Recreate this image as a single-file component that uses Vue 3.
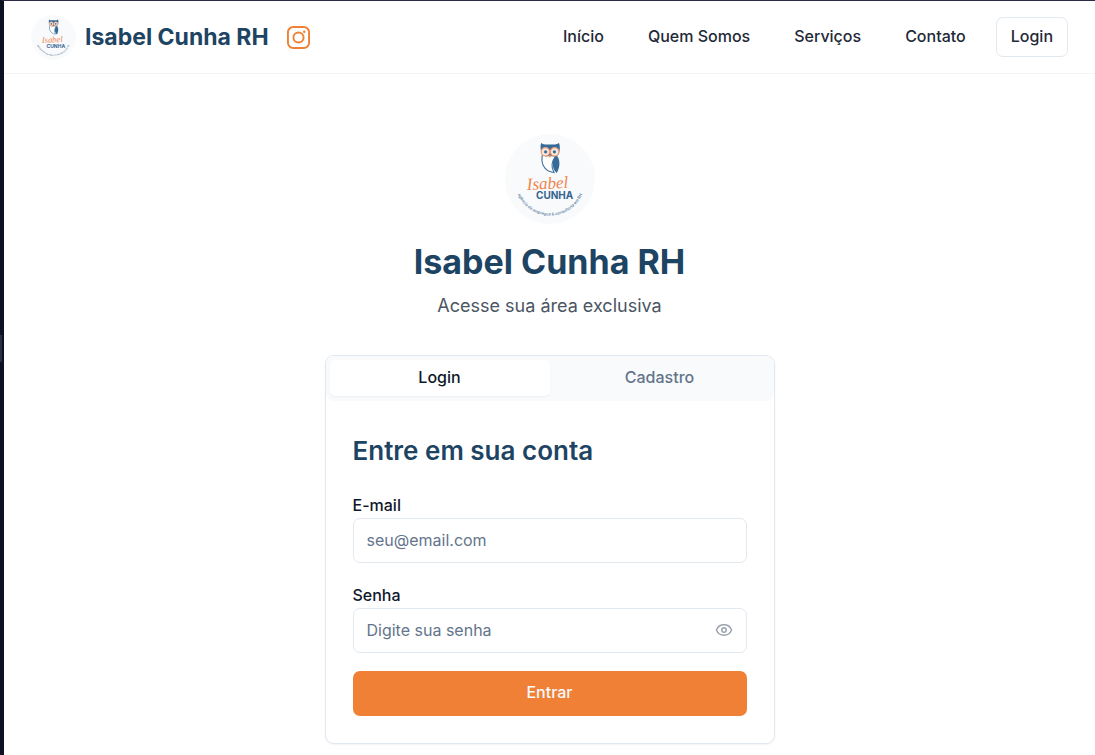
<script setup>
import { ref } from 'vue'

const links = ['Início', 'Quem Somos', 'Serviços', 'Contato']
const tabs = ['Login', 'Cadastro']
const activeTab = ref('Login')
const showPassword = ref(false)
const email = ref('')
const password = ref('')
</script>

<template>
  <div class="page">
    <span class="handle" aria-hidden="true"></span>

    <svg class="defs" width="0" height="0" aria-hidden="true">
      <symbol id="brand" viewBox="0 0 90 90" overflow="visible">
        <circle cx="45" cy="45" r="45" fill="#f8fafc" />
        <path d="M37.6 20 C35.5 28 38 37 49 38.5 C46 33 46.5 27 51 22 Z" fill="#fff" stroke="#3f6f98" stroke-width="1.1" />
        <path d="M51 21 C55 24 55.8 32 51.8 38.9 C46.5 35 46.5 26 51 21 Z" fill="#346b98" />
        <path d="M36.2 9 C39 11.2 42 10.5 45 10.5 C48 10.5 51 11.2 54 9 C55.4 12 54.8 16 54 20 C51 23 48 22.5 45 22 C42 22.5 39 23 36.8 20 C35.5 16 35 12 36.2 9 Z" fill="#346b98" />
        <circle cx="40.4" cy="17.8" r="4.2" fill="#fbe6da" stroke="#ee9c78" stroke-width="1.2" />
        <circle cx="49.6" cy="17.8" r="4.2" fill="#fbe6da" stroke="#ee9c78" stroke-width="1.2" />
        <circle cx="40.6" cy="17.8" r="1.6" fill="#346b98" />
        <circle cx="49.4" cy="17.8" r="1.6" fill="#346b98" />
        <path d="M43.6 21 L46.4 21 L45 24 Z" fill="#f08040" />
        <text x="22" y="56" class="script" transform="rotate(-3 22 56)">Isabel</text>
        <text x="31" y="65" class="surname">CUNHA</text>
        <path id="arc" d="M10.8 54 A35 35 0 0 0 79.2 54" fill="none" />
        <text class="tagline"><textPath href="#arc" startOffset="50%" text-anchor="middle">agência de empregos &amp; consultoria em RH</textPath></text>
      </symbol>
    </svg>

    <header class="topbar">
      <div class="brand">
        <svg class="logo-small" role="img" aria-label="Isabel Cunha"><use href="#brand" /></svg>
        <span class="brand-name">Isabel Cunha RH</span>
        <a class="instagram" href="#" aria-label="Instagram">
          <svg viewBox="0 0 24 24" fill="none" stroke="currentColor" stroke-width="2">
            <rect x="1" y="1" width="22" height="22" rx="5.5" />
            <circle cx="12" cy="12" r="5.3" />
            <circle cx="18" cy="6" r="1.3" fill="currentColor" stroke="none" />
          </svg>
        </a>
      </div>
      <nav class="nav">
        <a v-for="link in links" :key="link" href="#" class="nav-link">{{ link }}</a>
        <a href="#" class="nav-login">Login</a>
      </nav>
    </header>

    <main class="main">
      <svg class="logo-large" role="img" aria-label="Isabel Cunha"><use href="#brand" /></svg>
      <h1>Isabel Cunha RH</h1>
      <p class="subtitle">Acesse sua área exclusiva</p>

      <section class="card">
        <div class="tabs" role="tablist">
          <button
            v-for="tab in tabs"
            :key="tab"
            type="button"
            role="tab"
            class="tab"
            :class="{ active: tab === activeTab }"
            :aria-selected="tab === activeTab"
            @click="activeTab = tab"
          >{{ tab }}</button>
        </div>
        <form class="form" @submit.prevent>
          <h2>Entre em sua conta</h2>
          <div class="field">
            <label for="email">E-mail</label>
            <input id="email" v-model="email" type="email" placeholder="seu@email.com" />
          </div>
          <div class="field">
            <label for="password">Senha</label>
            <div class="password">
              <input id="password" v-model="password" :type="showPassword ? 'text' : 'password'" placeholder="Digite sua senha" />
              <button type="button" class="reveal" aria-label="Mostrar senha" @click="showPassword = !showPassword">
                <svg viewBox="0 0 24 24" fill="none" stroke="currentColor" stroke-width="2" stroke-linecap="round" stroke-linejoin="round">
                  <path d="M2.06 12.35a1 1 0 0 1 0-.7 10.75 10.75 0 0 1 19.88 0 1 1 0 0 1 0 .7 10.75 10.75 0 0 1-19.88 0" />
                  <circle cx="12" cy="12" r="3" />
                </svg>
              </button>
            </div>
          </div>
          <button type="submit" class="submit">Entrar</button>
        </form>
      </section>
    </main>
  </div>
</template>

<style>
body {
  margin: 0;
  background: #fff;
}
</style>

<style scoped>
.page {
  position: relative;
  box-sizing: border-box;
  min-height: 100vh;
  border-top: 1px solid #2a2c44;
  border-left: 4px solid #0d1222;
  font-family: Inter, "Liberation Sans", sans-serif;
  font-size: 16px;
  line-height: 24px;
  color: #0f172a;
}
.handle {
  position: absolute;
  left: -4px;
  top: 334px;
  width: 2px;
  height: 27px;
  background: #2b3040;
}
.defs {
  position: absolute;
}
.script {
  font: italic 17px "Liberation Serif", serif;
  fill: #f0854e;
}
.surname {
  font: 700 10px Inter, sans-serif;
  fill: #34648f;
}
.tagline {
  font: 500 4px Inter, sans-serif;
  fill: #54799a;
}
.topbar {
  display: flex;
  align-items: center;
  justify-content: space-between;
  box-sizing: border-box;
  height: 73px;
  padding: 0 27px;
  border-bottom: 1px solid #f3f4f6;
}
.brand {
  display: flex;
  align-items: center;
}
.logo-small {
  width: 45px;
  height: 45px;
  overflow: visible;
}
.brand-name {
  margin: 0 18px 0 9px;
  font-size: 23px;
  font-weight: 700;
  line-height: 32px;
  color: #1e4463;
}
.instagram {
  display: flex;
  color: #f08035;
}
.instagram svg {
  width: 23px;
  height: 23px;
}
.nav {
  display: flex;
  align-items: center;
  gap: 16px;
}
.nav a {
  padding: 6px 14px 8px;
  color: #1f2937;
  font-weight: 500;
  text-decoration: none;
}
.nav .nav-login {
  border: 1px solid #e2e8f0;
  border-radius: 7px;
}
.main {
  display: flex;
  flex-direction: column;
  align-items: center;
  padding: 60px 16px 11px;
}
.logo-large {
  width: 90px;
  height: 90px;
  overflow: visible;
}
h1 {
  margin: 18px 0 10px;
  font-size: 34px;
  font-weight: 700;
  line-height: 40px;
  color: #1e4463;
}
.subtitle {
  margin: 0 0 35px;
  font-size: 18px;
  line-height: 28px;
  color: #4b5563;
}
.card {
  box-sizing: border-box;
  width: 100%;
  max-width: 450px;
  border: 1px solid #e2e8f0;
  border-radius: 9px;
  background: #fff;
  box-shadow: 0 1px 2px rgba(0, 0, 0, 0.05);
}
.tabs {
  display: grid;
  grid-template-columns: 1fr 1fr;
  padding: 4px 4px 5px;
  border-radius: 8px;
  background: #f8fafc;
}
.tab {
  padding: 5px 14px 7px;
  border: 0;
  border-radius: 5px;
  background: transparent;
  color: #64748b;
  font: 500 16px/24px Inter, sans-serif;
}
.tab.active {
  background: #fff;
  color: #0f172a;
  box-shadow: 0 1px 2px rgba(0, 0, 0, 0.05);
}
.form {
  display: flex;
  flex-direction: column;
  gap: 18px;
  padding: 32px 27px 27px;
}
h2 {
  margin: 0 0 4px;
  font-size: 26px;
  font-weight: 600;
  line-height: 36px;
  color: #1e4463;
}
label {
  display: block;
  padding-top: 2px;
  line-height: 25px;
  font-weight: 500;
}
input {
  display: block;
  box-sizing: border-box;
  width: 100%;
  height: 45px;
  padding: 8px 13px 10px;
  border: 1px solid #e2e8f0;
  border-radius: 7px;
  background: #fff;
  color: #0f172a;
  font: 400 16px/24px Inter, sans-serif;
}
input::placeholder {
  color: #64748b;
  opacity: 1;
}
.password {
  position: relative;
}
.password input {
  padding-right: 45px;
}
.reveal {
  position: absolute;
  top: 0;
  right: 0;
  display: flex;
  align-items: center;
  height: 45px;
  padding: 0 14px 1px;
  border: 0;
  background: transparent;
  color: #9ca3af;
}
.reveal svg {
  width: 18px;
  height: 18px;
}
.submit {
  height: 45px;
  padding: 0 16px 3px;
  border: 0;
  border-radius: 7px;
  background: #f08035;
  color: #f8fafc;
  font: 500 16px/24px Inter, sans-serif;
}
</style>
